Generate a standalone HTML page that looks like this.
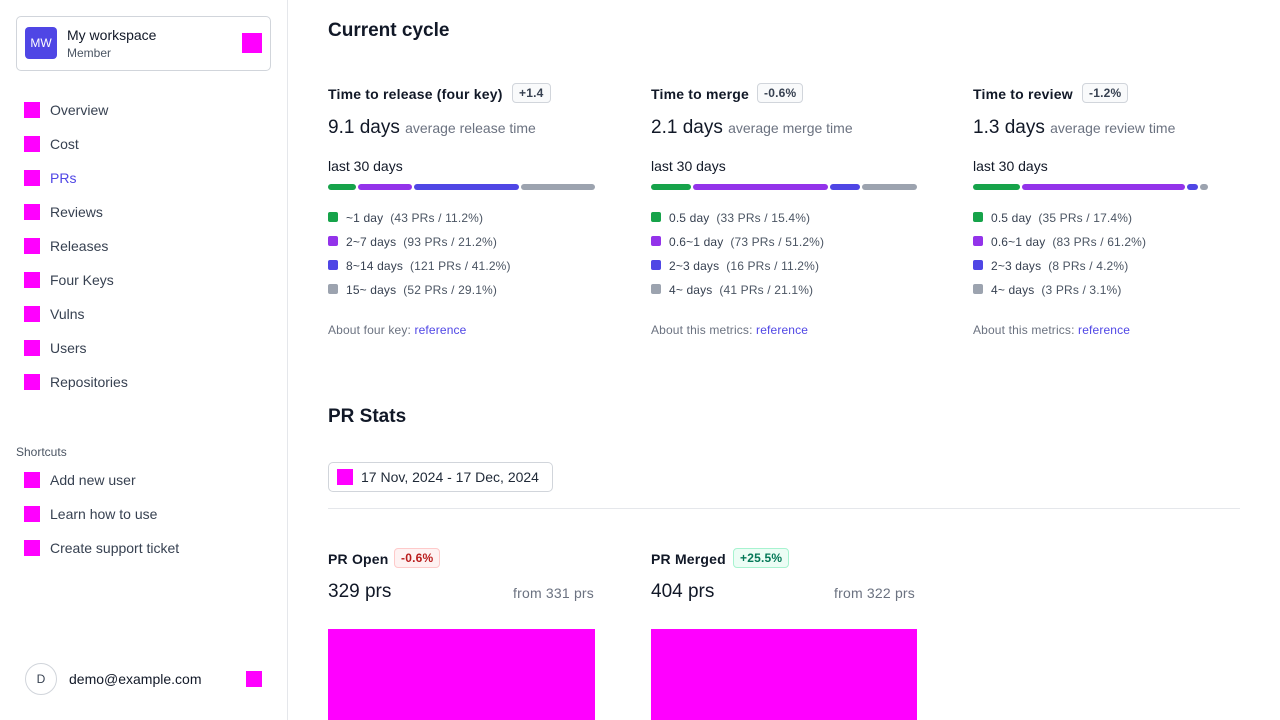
<!DOCTYPE html>
<html><head><meta charset="utf-8"><style>
*{margin:0;padding:0;box-sizing:border-box}
body{width:1280px;height:720px;overflow:hidden;background:#fff;font-family:"Liberation Sans",sans-serif;color:#111827;position:relative}
.a{position:absolute;white-space:nowrap}
.mg{background:#ff00ff}
.sb{position:absolute;left:0;top:0;width:288px;height:720px;border-right:1px solid #e5e7eb}
.nav{font-size:14px;color:#374151}
.h2{font-size:19px;font-weight:bold;color:#111827}
.t{font-size:14px;font-weight:bold;letter-spacing:0.2px}
.badge{font-size:12px;border:1px solid #d1d5db;border-radius:4px;padding:2px 6px;background:#f9fafb;color:#374151;font-weight:bold;letter-spacing:0.2px}
.big{font-size:19px;color:#111827}
.sub{font-size:14px;color:#6b7280}
.leg{font-size:12px;color:#374151;letter-spacing:0.15px}
.leg span{color:#4b5563}
.sq{position:absolute;width:10px;height:10px;border-radius:2px}
.bar{position:absolute;height:6px;border-radius:3px;top:184px}
.ab{font-size:12px;color:#6b7280;letter-spacing:0.15px}
.ab b{font-weight:normal;color:#4f46e5}
</style></head><body>
<div class="sb"></div>
<div class="a" style="left:16px;top:16px;width:255px;height:55px;border:1px solid #d1d5db;border-radius:5px"></div>
<div class="a" style="left:25px;top:27px;width:32px;height:32px;background:#4f46e5;border-radius:4px;color:#fff;font-size:12px;line-height:32px;text-align:center">MW</div>
<div class="a" style="left:67px;top:27px;font-size:14px;color:#111827">My workspace</div>
<div class="a" style="left:67px;top:46px;font-size:12px;color:#4b5563">Member</div>
<div class="a mg" style="left:242px;top:33px;width:20px;height:20px"></div>

<div class="a mg" style="left:24px;top:102px;width:16px;height:16px"></div><div class="a nav" style="left:50px;top:102px">Overview</div>
<div class="a mg" style="left:24px;top:136px;width:16px;height:16px"></div><div class="a nav" style="left:50px;top:136px">Cost</div>
<div class="a mg" style="left:24px;top:170px;width:16px;height:16px"></div><div class="a nav" style="left:50px;top:170px;color:#4f46e5">PRs</div>
<div class="a mg" style="left:24px;top:204px;width:16px;height:16px"></div><div class="a nav" style="left:50px;top:204px">Reviews</div>
<div class="a mg" style="left:24px;top:238px;width:16px;height:16px"></div><div class="a nav" style="left:50px;top:238px">Releases</div>
<div class="a mg" style="left:24px;top:272px;width:16px;height:16px"></div><div class="a nav" style="left:50px;top:272px">Four Keys</div>
<div class="a mg" style="left:24px;top:306px;width:16px;height:16px"></div><div class="a nav" style="left:50px;top:306px">Vulns</div>
<div class="a mg" style="left:24px;top:340px;width:16px;height:16px"></div><div class="a nav" style="left:50px;top:340px">Users</div>
<div class="a mg" style="left:24px;top:374px;width:16px;height:16px"></div><div class="a nav" style="left:50px;top:374px">Repositories</div>
<div class="a" style="left:16px;top:445px;font-size:12px;color:#4b5563">Shortcuts</div>
<div class="a mg" style="left:24px;top:472px;width:16px;height:16px"></div><div class="a nav" style="left:50px;top:472px">Add new user</div>
<div class="a mg" style="left:24px;top:506px;width:16px;height:16px"></div><div class="a nav" style="left:50px;top:506px">Learn how to use</div>
<div class="a mg" style="left:24px;top:540px;width:16px;height:16px"></div><div class="a nav" style="left:50px;top:540px">Create support ticket</div>
<div class="a" style="left:25px;top:663px;width:32px;height:32px;border:1px solid #d1d5db;border-radius:50%;font-size:12px;line-height:30px;text-align:center;color:#374151">D</div>
<div class="a" style="left:69px;top:671px;font-size:14px;color:#111827">demo@example.com</div>
<div class="a mg" style="left:246px;top:671px;width:16px;height:16px"></div>

<div class="a h2" style="left:328px;top:20px">Current cycle</div>

<!-- col1 -->
<div class="a t" style="left:328px;top:86px">Time to release (four key)</div>
<div class="a badge" style="left:512px;top:83px">+1.4</div>
<div class="a big" style="left:328px;top:117px">9.1 days <span class="sub">average release time</span></div>
<div class="a" style="left:328px;top:158px;font-size:14px">last 30 days</div>
<div class="bar" style="left:328px;width:28px;background:#16a34a"></div>
<div class="bar" style="left:358px;width:54px;background:#9333ea"></div>
<div class="bar" style="left:414px;width:105px;background:#4f46e5"></div>
<div class="bar" style="left:521px;width:74px;background:#9ca3af"></div>
<div class="sq" style="left:328px;top:212px;background:#16a34a"></div><div class="a leg" style="left:346px;top:211px">~1 day &nbsp;<span>(43 PRs / 11.2%)</span></div>
<div class="sq" style="left:328px;top:236px;background:#9333ea"></div><div class="a leg" style="left:346px;top:235px">2~7 days &nbsp;<span>(93 PRs / 21.2%)</span></div>
<div class="sq" style="left:328px;top:260px;background:#4f46e5"></div><div class="a leg" style="left:346px;top:259px">8~14 days &nbsp;<span>(121 PRs / 41.2%)</span></div>
<div class="sq" style="left:328px;top:284px;background:#9ca3af"></div><div class="a leg" style="left:346px;top:283px">15~ days &nbsp;<span>(52 PRs / 29.1%)</span></div>
<div class="a ab" style="left:328px;top:323px">About four key: <b>reference</b></div>

<!-- col2 -->
<div class="a t" style="left:651px;top:86px">Time to merge</div>
<div class="a badge" style="left:757px;top:83px">-0.6%</div>
<div class="a big" style="left:651px;top:117px">2.1 days <span class="sub">average merge time</span></div>
<div class="a" style="left:651px;top:158px;font-size:14px">last 30 days</div>
<div class="bar" style="left:651px;width:40px;background:#16a34a"></div>
<div class="bar" style="left:693px;width:135px;background:#9333ea"></div>
<div class="bar" style="left:830px;width:30px;background:#4f46e5"></div>
<div class="bar" style="left:862px;width:55px;background:#9ca3af"></div>
<div class="sq" style="left:651px;top:212px;background:#16a34a"></div><div class="a leg" style="left:669px;top:211px">0.5 day &nbsp;<span>(33 PRs / 15.4%)</span></div>
<div class="sq" style="left:651px;top:236px;background:#9333ea"></div><div class="a leg" style="left:669px;top:235px">0.6~1 day &nbsp;<span>(73 PRs / 51.2%)</span></div>
<div class="sq" style="left:651px;top:260px;background:#4f46e5"></div><div class="a leg" style="left:669px;top:259px">2~3 days &nbsp;<span>(16 PRs / 11.2%)</span></div>
<div class="sq" style="left:651px;top:284px;background:#9ca3af"></div><div class="a leg" style="left:669px;top:283px">4~ days &nbsp;<span>(41 PRs / 21.1%)</span></div>
<div class="a ab" style="left:651px;top:323px">About this metrics: <b>reference</b></div>

<!-- col3 -->
<div class="a t" style="left:973px;top:86px">Time to review</div>
<div class="a badge" style="left:1082px;top:83px">-1.2%</div>
<div class="a big" style="left:973px;top:117px">1.3 days <span class="sub">average review time</span></div>
<div class="a" style="left:973px;top:158px;font-size:14px">last 30 days</div>
<div class="bar" style="left:973px;width:47px;background:#16a34a"></div>
<div class="bar" style="left:1022px;width:163px;background:#9333ea"></div>
<div class="bar" style="left:1187px;width:11px;background:#4f46e5"></div>
<div class="bar" style="left:1200px;width:8px;background:#9ca3af"></div>
<div class="sq" style="left:973px;top:212px;background:#16a34a"></div><div class="a leg" style="left:991px;top:211px">0.5 day &nbsp;<span>(35 PRs / 17.4%)</span></div>
<div class="sq" style="left:973px;top:236px;background:#9333ea"></div><div class="a leg" style="left:991px;top:235px">0.6~1 day &nbsp;<span>(83 PRs / 61.2%)</span></div>
<div class="sq" style="left:973px;top:260px;background:#4f46e5"></div><div class="a leg" style="left:991px;top:259px">2~3 days &nbsp;<span>(8 PRs / 4.2%)</span></div>
<div class="sq" style="left:973px;top:284px;background:#9ca3af"></div><div class="a leg" style="left:991px;top:283px">4~ days &nbsp;<span>(3 PRs / 3.1%)</span></div>
<div class="a ab" style="left:973px;top:323px">About this metrics: <b>reference</b></div>

<div class="a h2" style="left:328px;top:406px">PR Stats</div>
<div class="a" style="left:328px;top:462px;width:225px;height:30px;border:1px solid #d1d5db;border-radius:5px"></div>
<div class="a mg" style="left:337px;top:469px;width:16px;height:16px"></div>
<div class="a" style="left:361px;top:469px;font-size:14px;color:#1f2937">17 Nov, 2024 - 17 Dec, 2024</div>
<div class="a" style="left:328px;top:508px;width:912px;height:1px;background:#e5e7eb"></div>

<div class="a t" style="left:328px;top:551px">PR Open</div>
<div class="a badge" style="left:394px;top:548px;background:#fef2f2;border-color:#fecaca;color:#b91c1c">-0.6%</div>
<div class="a big" style="left:328px;top:581px">329 prs</div>
<div class="a sub" style="left:513px;top:585px;letter-spacing:0.2px">from 331 prs</div>
<div class="a mg" style="left:328px;top:629px;width:267px;height:91px"></div>

<div class="a t" style="left:651px;top:551px">PR Merged</div>
<div class="a badge" style="left:733px;top:548px;background:#ecfdf5;border-color:#a7f3d0;color:#047857">+25.5%</div>
<div class="a big" style="left:651px;top:581px">404 prs</div>
<div class="a sub" style="left:834px;top:585px;letter-spacing:0.2px">from 322 prs</div>
<div class="a mg" style="left:651px;top:629px;width:266px;height:91px"></div>
</body></html>
